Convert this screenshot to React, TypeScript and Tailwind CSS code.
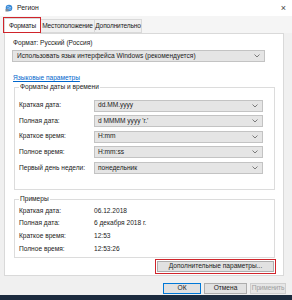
import React from "react";

const Chevron = () => (
  <svg width="6" height="4" viewBox="0 0 6 4" className="shrink-0">
    <path d="M0.5 0.5 L3 3 L5.5 0.5" fill="none" stroke="#606060" strokeWidth="0.8" />
  </svg>
);

const Select = ({ value, className = "" }: { value: string; className?: string }) => (
  <div
    className={
      "h-[12px] bg-[#e5e5e5] border border-[#c3c3c3] flex items-center justify-between pl-[3px] pr-[4px] " +
      className
    }
  >
    <span className="leading-none">{value}</span>
    <Chevron />
  </div>
);

const FRow = ({ label, value }: { label: string; value: string }) => (
  <div className="flex items-center h-[12px] mb-[3.6px]">
    <div className="w-[78px] pl-[3px]">{label}</div>
    <Select value={value} className="w-[169px]" />
  </div>
);

const ERow = ({ label, value }: { label: string; value: string }) => (
  <div className="flex items-center h-[12.7px]">
    <div className="w-[78px] pl-[3px]">{label}</div>
    <div>{value}</div>
  </div>
);

export default function App() {
  return (
    <div
      className="relative w-[292px] h-[300px] bg-[#f0f0f0] overflow-hidden text-[6.6px] text-[#1a1a1a] leading-none"
      style={{ fontFamily: '"Liberation Sans", Arial, sans-serif' }}
    >
      {/* title bar */}
      <div className="h-[16px] bg-white flex items-center pl-[5px] pr-[6px]">
        <svg width="8" height="8" viewBox="0 0 8 8" className="mr-[4px]">
          <circle cx="4" cy="4" r="3.3" fill="#3a8ad6" />
          <path d="M2 3 Q3 2 4 3 T6 3.5 M2.2 5 Q4 4.5 5.8 5.2" stroke="#bfe0ff" strokeWidth="0.7" fill="none" />
          <rect x="0.5" y="5" width="3" height="2.5" fill="#7c8a99" />
        </svg>
        <span className="text-[6.8px]">Регион</span>
        <span className="ml-auto text-[9px] text-[#444]">×</span>
      </div>

      {/* tabs */}
      <div className="flex items-end h-[17px] pl-[4px] bg-[#f5f5f5] tracking-[-0.15px]">
        <div className="h-[16px] w-[37px] bg-white border border-b-0 border-[#d9d9d9] flex items-center justify-center relative z-10 -mb-[1px]">
          Форматы
        </div>
        <div className="h-[14px] w-[54px] border border-l-0 border-[#d9d9d9] flex items-center justify-center bg-[#f0f0f0]">
          Местоположение
        </div>
        <div className="h-[14px] w-[47px] border border-l-0 border-[#d9d9d9] flex items-center justify-center bg-[#f0f0f0]">
          Дополнительно
        </div>
      </div>

      {/* panel */}
      <div className="ml-[4px] w-[280px] h-[243px] bg-white border border-[#d9d9d9] pt-[7px] pl-[7px]">
        <div className="pl-[1px] h-[5px] flex items-center">Формат: Русский (Россия)</div>
        <Select
          value="Использовать язык интерфейса Windows (рекомендуется)"
          className="mt-[4px] w-[253px] pl-[4px]"
        />
        <div className="mt-[13px] pl-[1px] text-[#0066cc] underline h-[8px]">Языковые параметры</div>

        <fieldset className="mt-[1px] ml-[2px] w-[261px] h-[106px] border border-[#dcdcdc] pl-[1px] pt-[9px]">
          <legend className="ml-[3px] px-[1px]">Форматы даты и времени</legend>
          <FRow label="Краткая дата:" value="dd.MM.yyyy" />
          <FRow label="Полная дата:" value="d MMMM yyyy 'г.'" />
          <FRow label="Краткое время:" value="H:mm" />
          <FRow label="Полное время:" value="H:mm:ss" />
          <FRow label="Первый день недели:" value="понедельник" />
        </fieldset>

        <fieldset className="mt-[6px] ml-[2px] w-[261px] h-[62px] border border-[#dcdcdc] pl-[1px] pt-[2px]">
          <legend className="ml-[3px] px-[1px]">Примеры</legend>
          <ERow label="Краткая дата:" value="06.12.2018" />
          <ERow label="Полная дата:" value="6 декабря 2018 г." />
          <ERow label="Краткое время:" value="12:53" />
          <ERow label="Полное время:" value="12:53:26" />
        </fieldset>
      </div>

      {/* dialog buttons */}
      <div className="flex pl-[163px] mt-[7px] gap-[3px]">
        <div className="w-[38px] h-[11px] bg-[#e1e1e1] border border-[#0078d7] flex items-center justify-center">ОК</div>
        <div className="w-[43px] h-[11px] bg-[#e1e1e1] border border-[#adadad] flex items-center justify-center">Отмена</div>
        <div className="w-[36px] h-[11px] bg-[#e6e6e6] border border-[#cfcfcf] flex items-center justify-center text-[#a0a0a0] tracking-[-0.2px]">Применить</div>
      </div>

      {/* taskbar strip */}
      <div className="absolute left-0 right-0 bottom-0 h-[5px] bg-[#1c2b3e]" />

      {/* Additional params button with red highlight */}
      <div className="absolute left-[155px] top-[259px] w-[121px] h-[15px] border-[1.5px] border-[#d0242b] p-[1px]">
        <div className="w-full h-full bg-[#e1e1e1] border border-[#adadad] flex items-center justify-center">
          Дополнительные параметры...
        </div>
      </div>

      {/* red highlight around tab */}
      <div className="absolute left-[3px] top-[17px] w-[38px] h-[16px] border-[1.5px] border-[#d0242b] z-20" />
    </div>
  );
}
